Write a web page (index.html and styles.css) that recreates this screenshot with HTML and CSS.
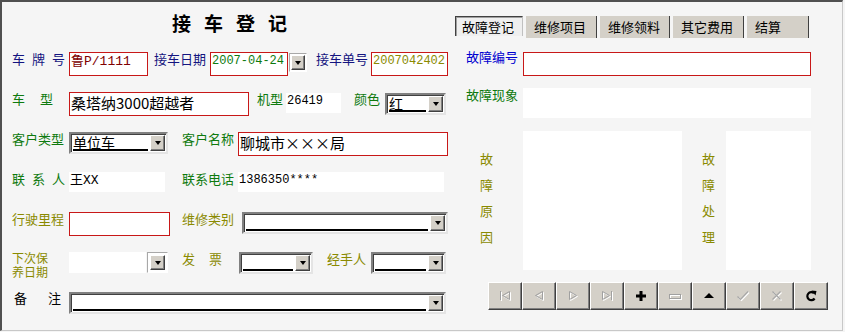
FILE: index.html
```html
<!DOCTYPE html>
<html lang="zh-CN">
<head>
    <meta charset="UTF-8">
    <title>接车登记</title>
    <link rel="stylesheet" href="styles.css">
</head>
<body>
    <div class="window">
        <!-- left: vehicle / customer form -->
        <div class="left">
            <div class="title">接车登记</div>

            <div class="row">
                <span class="lbl navy w57 sp7">车牌号</span>
                <div class="field req f-plate"><span class="mono13 maroon">鲁P/1111</span></div>
                <span class="lbl navy ml6 w56">接车日期</span>
                <div class="field req f-date"><span class="mono green">2007-04-24</span></div>
                <div class="ddbtn ml1"><span class="combo-btn"></span></div>
                <span class="lbl navy ml9 w55">接车单号</span>
                <div class="field req f-no"><span class="mono olive">2007042402</span></div>
            </div>

            <div class="row">
                <span class="lbl green w57 sp15">车型</span>
                <div class="field req f-model"><span class="cjk15">桑塔纳3000超越者</span></div>
                <span class="lbl green ml8 w29">机型</span>
                <div class="field f-engine"><span class="mono">26419</span></div>
                <span class="lbl green ml13 w31">颜色</span>
                <div class="combo f-color"><span class="combo-text">红</span><span class="combo-btn"></span></div>
            </div>

            <div class="row">
                <span class="lbl green w57">客户类型</span>
                <div class="combo f-ctype"><span class="combo-text">单位车</span><span class="combo-btn"></span></div>
                <span class="lbl green ml14 w56">客户名称</span>
                <div class="field req f-cname"><span class="cjk15">聊城市×××局</span></div>
            </div>

            <div class="row">
                <span class="lbl green w57 sp7">联系人</span>
                <div class="field f-contact"><span class="mono12">王XX</span></div>
                <span class="lbl green ml17 w56">联系电话</span>
                <div class="field f-phone"><span class="mono">1386350****</span></div>
            </div>

            <div class="row">
                <span class="lbl olive w57">行驶里程</span>
                <div class="field req f-mileage"></div>
                <span class="lbl olive ml12 w60">维修类别</span>
                <div class="combo f-rtype"><span class="combo-text"></span><span class="combo-btn"></span></div>
            </div>

            <div class="row">
                <span class="lbl olive w57 two-line">下次保<br>养日期</span>
                <div class="field f-next"></div>
                <div class="ddbtn big ml1"><span class="combo-btn"></span></div>
                <span class="lbl olive ml14 w57 sp14">发票</span>
                <div class="combo f-invoice"><span class="combo-text"></span><span class="combo-btn"></span></div>
                <span class="lbl olive ml14 w44">经手人</span>
                <div class="combo f-handler"><span class="combo-text"></span><span class="combo-btn"></span></div>
            </div>

            <div class="row">
                <span class="lbl black w57 sp20 note-lbl">备注</span>
                <div class="combo f-note"><span class="combo-text"></span><span class="combo-btn"></span></div>
            </div>
        </div>

        <!-- right: fault tab page -->
        <div class="right">
            <div class="tabs">
                <div class="tab active t1">故障登记</div>
                <div class="tab t2">维修项目</div>
                <div class="tab t3">维修领料</div>
                <div class="tab t4">其它费用</div>
                <div class="tab t5">结算</div>
            </div>

            <div class="rrow r-code">
                <span class="lbl blue w57 up">故障编号</span>
                <div class="field req f-fcode"></div>
            </div>

            <div class="rrow r-symptom">
                <span class="lbl green w57 up2">故障现象</span>
                <div class="field f-symptom"></div>
            </div>

            <div class="memos">
                <div class="vlbl v1">故<br>障<br>原<br>因</div>
                <div class="memo m1"></div>
                <div class="vlbl v2">故<br>障<br>处<br>理</div>
                <div class="memo m2"></div>
            </div>

            <div class="navigator">
                <div class="nav-btn">
                    <svg width="14" height="14" viewBox="0 0 14 14"><g fill="none" stroke-width="1"><g stroke="#fff" transform="translate(1,1)"><path d="M2.5 2v9"/><path d="M11.5 2.5 L4.5 6.5 L11.5 10.5 Z"/></g><g stroke="#a0a0a0"><path d="M2.5 2v9"/><path d="M11.5 2.5 L4.5 6.5 L11.5 10.5 Z"/></g></g></svg>
                </div>
                <div class="nav-btn">
                    <svg width="14" height="14" viewBox="0 0 14 14"><g fill="none" stroke-width="1"><path stroke="#fff" transform="translate(1,1)" d="M10.5 2.5 L3.5 6.5 L10.5 10.5 Z"/><path stroke="#a0a0a0" d="M10.5 2.5 L3.5 6.5 L10.5 10.5 Z"/></g></svg>
                </div>
                <div class="nav-btn">
                    <svg width="14" height="14" viewBox="0 0 14 14"><g fill="none" stroke-width="1"><path stroke="#fff" transform="translate(1,1)" d="M3.5 2.5 L10.5 6.5 L3.5 10.5 Z"/><path stroke="#a0a0a0" d="M3.5 2.5 L10.5 6.5 L3.5 10.5 Z"/></g></svg>
                </div>
                <div class="nav-btn">
                    <svg width="14" height="14" viewBox="0 0 14 14"><g fill="none" stroke-width="1"><g stroke="#fff" transform="translate(1,1)"><path d="M11.5 2v9"/><path d="M2.5 2.5 L9.5 6.5 L2.5 10.5 Z"/></g><g stroke="#a0a0a0"><path d="M11.5 2v9"/><path d="M2.5 2.5 L9.5 6.5 L2.5 10.5 Z"/></g></g></svg>
                </div>
                <div class="nav-btn">
                    <svg width="14" height="14" viewBox="0 0 14 14"><path d="M5.5 2h3v3.5h3.5v3h-3.5v3.5h-3v-3.5h-3.5v-3h3.5z" fill="#000"/></svg>
                </div>
                <div class="nav-btn">
                    <svg width="18" height="14" viewBox="0 0 18 14"><g fill="none" stroke-width="1"><rect x="3.5" y="5.5" width="11" height="4" stroke="#fff" transform="translate(1,1)"/><rect x="3.5" y="5.5" width="11" height="4" stroke="#a0a0a0"/></g></svg>
                </div>
                <div class="nav-btn">
                    <svg width="14" height="14" viewBox="0 0 14 14"><path d="M7 4 L12 9 L2 9 Z" fill="#000"/></svg>
                </div>
                <div class="nav-btn">
                    <svg width="16" height="14" viewBox="0 0 16 14"><g fill="none" stroke-width="1.2"><path stroke="#fff" transform="translate(1,1)" d="M2.5 7.5 L5.5 10.5 L13 2.5"/><path stroke="#a8a8a8" d="M2.5 7.5 L5.5 10.5 L13 2.5"/></g></svg>
                </div>
                <div class="nav-btn">
                    <svg width="14" height="14" viewBox="0 0 14 14"><g fill="none" stroke-width="1.2"><path stroke="#fff" transform="translate(1,1)" d="M2.5 2.5 L10.5 10.5 M10.5 2.5 L2.5 10.5"/><path stroke="#a8a8a8" d="M2.5 2.5 L10.5 10.5 M10.5 2.5 L2.5 10.5"/></g></svg>
                </div>
                <div class="nav-btn">
                    <svg width="14" height="14" viewBox="0 0 14 14"><path d="M10 4.2 A4 4 0 1 0 10.6 9.5" fill="none" stroke="#000" stroke-width="2.2"/><path d="M7.5 1.5 L12.5 2 L11.5 6.5 Z" fill="#000"/></svg>
                </div>
            </div>
        </div>
    </div>
</body>
</html>
```

FILE: styles.css
```css
* {
    box-sizing: border-box;
}

body {
    margin: 0;
    background-color: #f5f5f5;
    font-family: "Noto Sans CJK SC", "Noto Sans", sans-serif;
    font-size: 13px;
    color: #000;
}

.window {
    width: 843px;
    height: 331px;
    border-top: 2px solid #505050;
    border-left: 2px solid #505050;
    border-right: 1px solid #c8c8c8;
    border-bottom: 1px solid #c8c8c8;
    background-color: #f5f5f5;
    display: flex;
}

/* ---------- left form ---------- */

.left {
    width: 453px;
    padding-left: 10px;
    flex: none;
}

.title {
    height: 50px;
    padding-top: 9px;
    padding-left: 160px;
    font-size: 19px;
    font-weight: bold;
    line-height: 24px;
    letter-spacing: 13px;
}

.row {
    height: 40px;
    display: flex;
    align-items: flex-start;
}

.lbl {
    flex: none;
    line-height: 16px;
    white-space: nowrap;
    margin-top: -1px;
}

.two-line {
    font-size: 12px;
    line-height: 14px;
    margin-top: -1px;
}

.note-lbl {
    padding-left: 2px;
    margin-top: -2px;
}

.navy { color: #141480; }
.blue { color: #0000d0; }
.green { color: #0e7a0e; }
.olive { color: #8a8a00; }
.black { color: #000; }
.maroon { color: #800000; }

.sp7 { letter-spacing: 7px; }
.sp14 { letter-spacing: 14px; }
.sp15 { letter-spacing: 15px; }
.sp20 { letter-spacing: 21px; }

.w29 { width: 29px; }
.w31 { width: 31px; }
.w44 { width: 44px; }
.w55 { width: 55px; }
.w56 { width: 56px; }
.w57 { width: 57px; }
.w60 { width: 60px; }

.ml1 { margin-left: 1px; }
.ml6 { margin-left: 6px; }
.ml8 { margin-left: 8px; }
.ml9 { margin-left: 9px; }
.ml12 { margin-left: 12px; }
.ml13 { margin-left: 13px; }
.ml14 { margin-left: 14px; }
.ml17 { margin-left: 17px; }

/* edit boxes */
.field {
    flex: none;
    background: #fff;
    height: 20px;
    padding: 0 1px;
    white-space: nowrap;
    overflow: hidden;
    display: flex;
    align-items: flex-start;
}

.field.req {
    border: 1px solid #c81818;
    height: 24px;
}

.mono {
    font-family: "Liberation Mono", monospace;
    font-size: 12px;
    line-height: 16px;
}

.mono12 {
    font-family: "Liberation Mono", "Noto Sans CJK SC", monospace;
    font-size: 13px;
    line-height: 18px;
}

.mono13 {
    font-family: "Liberation Mono", "Noto Sans CJK SC", monospace;
    font-size: 13px;
    line-height: 18px;
}

.cjk15 {
    font-size: 15px;
    line-height: 20px;
}

.f-plate { width: 79px; }
.f-date { width: 78px; }
.f-no { width: 77px; }
.f-model { width: 180px; }
.f-engine { width: 55px; margin-top: 1px; }
.f-cname { width: 210px; }
.f-contact { width: 96px; }
.f-phone { width: 206px; }
.f-mileage { width: 101px; height: 25px; }
.f-next { width: 77px; height: 21px; }

/* combo boxes */
.combo {
    flex: none;
    height: 22px;
    display: flex;
    background: #fff;
    border: 2px solid;
    border-color: #808080 #e4e4e4 #e4e4e4 #808080;
    box-shadow: inset 1px 1px 0 #404040;
    padding: 1px 1px 1px 2px;
}

.combo-text {
    flex: 1;
    font-size: 14px;
    line-height: 14px;
    border-bottom: 2px solid #000;
    margin-right: 2px;
    white-space: nowrap;
}

.combo-btn {
    width: 15px;
    flex: none;
    background: #d4d0c8;
    border: 1px solid;
    border-color: #fff #404040 #404040 #fff;
    box-shadow: inset -1px -1px 0 #808080;
    display: flex;
    align-items: center;
    justify-content: center;
}

.combo-btn::after {
    content: "";
    border-left: 3.5px solid transparent;
    border-right: 3.5px solid transparent;
    border-top: 4px solid #000;
}

.f-color { width: 61px; margin-top: 1px; }
.f-ctype { width: 99px; }
.f-rtype { width: 206px; }
.f-invoice { width: 74px; }
.f-handler { width: 75px; }
.f-note { width: 377px; }

.ddbtn {
    flex: none;
    width: 18px;
    height: 19px;
    margin-top: 1px;
    background: #fff;
    border: 1px solid #a8a8a8;
    border-right-color: #fff;
    border-bottom-color: #fff;
    padding: 1px;
    display: flex;
}

.ddbtn .combo-btn {
    width: 100%;
}

.ddbtn.big {
    width: 21px;
    height: 21px;
    margin-top: 0;
    padding: 2px;
}

/* ---------- right tab page ---------- */

.right {
    flex: 1;
    padding-top: 14px;
}

.tabs {
    display: flex;
    height: 22px;
}

.tab {
    height: 22px;
    padding: 3px 0 0 8px;
    margin-right: 3px;
    background: #d4d0c8;
    border-right: 1px solid #404040;
    line-height: 16px;
    white-space: nowrap;
}

.tab.active {
    height: 20px;
    padding-left: 6px;
    background: #efefef;
    border-top: 1px solid #404040;
    border-left: 1px solid #404040;
    border-right: 1px solid #c0c0c0;
    box-shadow: inset 1px 1px 0 #a0a0a0;
    padding-top: 2px;
}

.t1 { width: 68px; }
.t2 { width: 71px; }
.t3 { width: 70px; }
.t4 { width: 71px; }
.t5 { width: 62px; }

.rrow {
    display: flex;
    align-items: flex-start;
    padding-left: 11px;
}

.r-code {
    margin-top: 14px;
}

.r-symptom {
    margin-top: 12px;
}

.up { margin-top: -3px; }
.up2 { margin-top: -1px; }

.f-fcode { width: 288px; }
.f-symptom { width: 288px; height: 30px; }

.memos {
    margin-top: 13px;
    height: 139px;
    display: flex;
    padding-left: 11px;
}

.vlbl {
    flex: none;
    color: #8a8a00;
    line-height: 26px;
    padding-top: 15px;
}

.v1 { width: 57px; padding-left: 14px; }
.v2 { width: 44px; padding-left: 20px; }

.memo {
    flex: none;
    background: #fff;
    height: 139px;
}

.m1 { width: 159px; }
.m2 { width: 85px; }

.navigator {
    margin-top: 12px;
    margin-left: 33px;
    display: flex;
}

.nav-btn {
    width: 34px;
    height: 28px;
    background: #d4d0c8;
    border: 1px solid;
    border-color: #fff #404040 #404040 #fff;
    box-shadow: inset -1px -1px 0 #808080;
    display: flex;
    align-items: center;
    justify-content: center;
}
```
